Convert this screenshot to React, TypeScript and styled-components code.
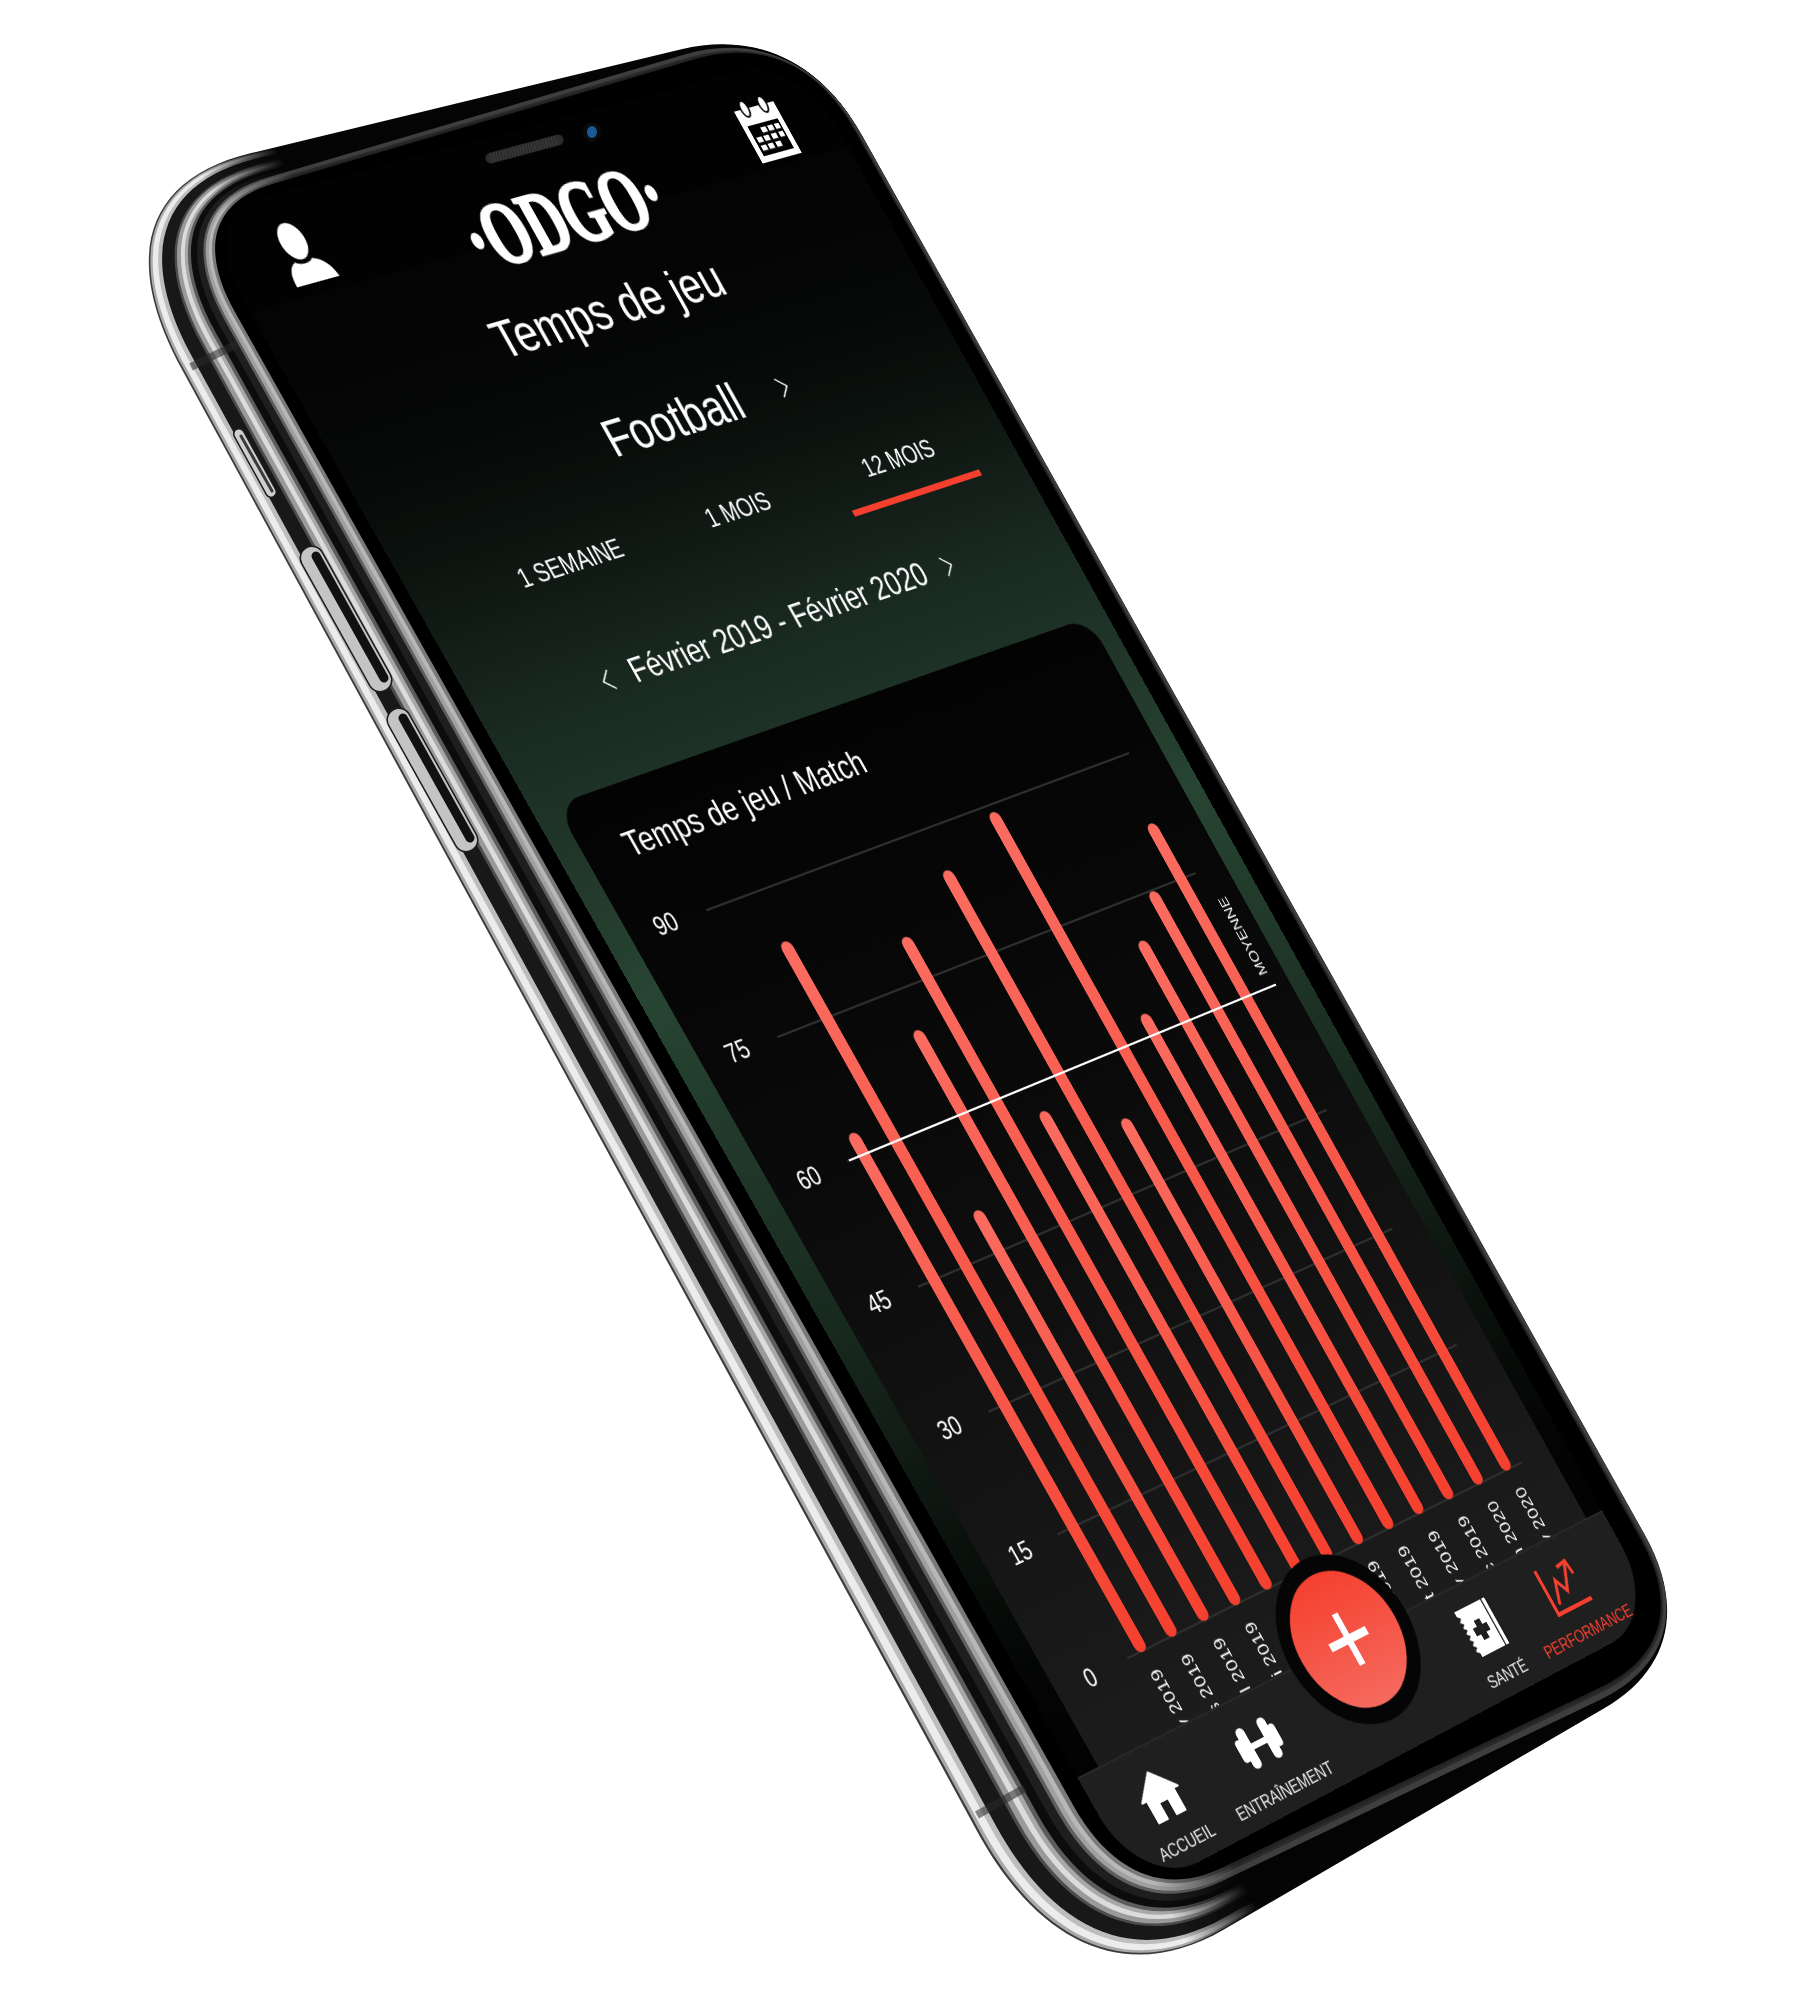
import React from 'react';
import styled, { createGlobalStyle } from 'styled-components';

type Pt = [number, number];

/* Where the flat 375x812 screen lands in the picture. */
const SCREEN: Pt[] = [[195, 215], [798, 56], [1661, 1617], [1142, 1892]];
/* Outer silhouette of the device body, same corner order. */
const OUTER: Pt[] = [[86, 193], [798, 21], [1708, 1648], [1077, 2015]];
const OUTER_R: [number, number][] = [[200, 170], [120, 130], [130, 120], [170, 210]];

const SW = 375;
const SH = 812;

function screenMatrix(q: Pt[]): string {
  const [p0, p1, p2, p3] = q;
  const dx1 = p1[0] - p2[0];
  const dy1 = p1[1] - p2[1];
  const dx2 = p3[0] - p2[0];
  const dy2 = p3[1] - p2[1];
  const sx = p0[0] - p1[0] + p2[0] - p3[0];
  const sy = p0[1] - p1[1] + p2[1] - p3[1];
  const den = dx1 * dy2 - dy1 * dx2;
  const g = (sx * dy2 - sy * dx2) / den;
  const h = (dx1 * sy - dy1 * sx) / den;
  const a = p1[0] - p0[0] + g * p1[0];
  const b = p3[0] - p0[0] + h * p3[0];
  const d = p1[1] - p0[1] + g * p1[1];
  const e = p3[1] - p0[1] + h * p3[1];
  return `matrix3d(${a / SW},${d / SW},0,${g / SW},${b / SH},${e / SH},0,${h / SH},0,0,1,0,${p0[0]},${p0[1]},0,1)`;
}

const lerp = (a: number, b: number, t: number) => a + (b - a) * t;

function bodyPath(fLeft: number, fRight: number): string {
  const fs = [fLeft, fRight, fRight, fLeft];
  const c = OUTER.map((o, i): Pt => [lerp(o[0], SCREEN[i][0], fs[i]), lerp(o[1], SCREEN[i][1], fs[i])]);
  const k = 0.64;
  let path = '';
  c.forEach((p, i) => {
    const prev = c[(i + 3) % 4];
    const next = c[(i + 1) % 4];
    const scale = lerp(1, 0.5, fs[i]);
    const rp = OUTER_R[i][0] * scale;
    const rn = OUTER_R[i][1] * scale;
    const lp = Math.hypot(prev[0] - p[0], prev[1] - p[1]);
    const ln = Math.hypot(next[0] - p[0], next[1] - p[1]);
    const a: Pt = [p[0] + ((prev[0] - p[0]) / lp) * rp, p[1] + ((prev[1] - p[1]) / lp) * rp];
    const b: Pt = [p[0] + ((next[0] - p[0]) / ln) * rn, p[1] + ((next[1] - p[1]) / ln) * rn];
    const c1: Pt = [lerp(a[0], p[0], k), lerp(a[1], p[1], k)];
    const c2: Pt = [lerp(b[0], p[0], k), lerp(b[1], p[1], k)];
    path += `${i === 0 ? 'M' : 'L'}${a[0]} ${a[1]} C${c1[0]} ${c1[1]} ${c2[0]} ${c2[1]} ${b[0]} ${b[1]} `;
  });
  return path + 'Z';
}

/* Bands of the metal edge, outermost first: fill, far colour, left and right inset. */
const BANDS: [string, string, number, number][] = [
  ['#3c3c3c', '#060606', 0, 0],
  ['#a9a9a9', '#050505', 0.02, 0.03],
  ['#ececec', '#050505', 0.05, 0.03],
  ['#bdbdbd', '#050505', 0.12, 0.03],
  ['#181818', '#040404', 0.17, 0.03],
  ['#4c4c4c', '#040404', 0.33, 0.03],
  ['#9a9a9a', '#040404', 0.36, 0.03],
  ['#dcdcdc', '#040404', 0.41, 0.03],
  ['#a8a8a8', '#040404', 0.46, 0.03],
  ['#5c5c5c', '#040404', 0.5, 0.03],
  ['#0c0c0c', '#040404', 0.54, 0.03],
  ['#1e1e1e', '#040404', 0.62, 0.03],
  ['#5e5e5e', '#3e3e3e', 0.7, 0],
  ['#a0a0a0', '#3e3e3e', 0.73, 0.06],
  ['#b8b8b8', '#2a2a2a', 0.77, 0.12],
  ['#7a7a7a', '#222222', 0.81, 0.17],
  ['#000000', '#000000', 0.85, 0.22],
];

const BARS = [62.6, 83.9, 50, 70, 79.9, 57, 85, 53, 89, 62.6, 70, 74.7, 81.8];
const MONTHS = ['Fév 2019', 'Mars 2019', 'Avril 2019', 'Mai 2019', 'Juin 2019', 'Juil 2019', 'Août 2019', 'Sept 2019', 'Oct 2019', 'Nov 2019', 'Déc 2019', 'Jan 2020', 'Fév 2020'];
const TICKS = [90, 75, 60, 45, 30, 15, 0];
const PLOT_H = 371;

const Global = createGlobalStyle`
  html, body { margin: 0; background: #fff; }
  body { font-family: "Liberation Sans", Arial, sans-serif; }
`;

const Canvas = styled.div`
  position: relative;
  width: 1818px;
  height: 2000px;
  overflow: hidden;
  background: #fff;
`;

const DeviceArt = styled.svg`
  position: absolute;
  left: 0;
  top: 0;
`;

const Screen = styled.div`
  position: absolute;
  left: 0;
  top: 0;
  width: ${SW}px;
  height: ${SH}px;
  transform-origin: 0 0;
  transform: ${screenMatrix(SCREEN)};
  display: flex;
  flex-direction: column;
  overflow: hidden;
  border-radius: 38px;
  color: #fff;
  background: linear-gradient(180deg, #020202 0%, #040504 10%, #070a08 16%, #0c130f 21%, #131f18 26%, #1a2b22 31%, #284432 46%, #213a2b 54%, #18291e 66%, #0b130e 78%, #030403 88%, #000 100%);
`;

const Header = styled.header`
  flex: none;
  height: 46px;
  box-sizing: border-box;
  display: flex;
  justify-content: space-between;
  align-items: flex-start;
  padding: 13px 27px 0 28px;
  background: #020202;
`;

const Logo = styled.div`
  margin: 12px 0 0 9px;
  font-family: "Liberation Serif", serif;
  font-weight: 700;
  font-size: 41px;
  line-height: 34px;
  letter-spacing: -0.5px;
  transform: scaleX(0.8);
  -webkit-text-stroke: 1.2px #fff;
  white-space: nowrap;
`;

const Title = styled.h1`
  margin: 27px 0 0;
  padding-left: 3px;
  font-weight: 400;
  font-size: 24px;
  line-height: 28px;
  text-align: center;
`;

const SportRow = styled.div`
  margin-top: 26px;
  padding-left: 147.5px;
  height: 30px;
  display: flex;
  align-items: center;
  gap: 25px;
  font-size: 24px;
  line-height: 30px;
`;

const Tabs = styled.nav`
  margin-top: 23px;
  padding-left: 39px;
  display: flex;
`;

const Tab = styled.div<{ $active?: boolean }>`
  width: 106px;
  box-sizing: border-box;
  display: flex;
  flex-direction: column;
  align-items: center;
  font-size: 12px;
  line-height: 16px;
  letter-spacing: -0.1px;

  &::after {
    content: '';
    margin-top: 8px;
    width: 86px;
    height: 3px;
    background: ${(p) => (p.$active ? '#f5402f' : 'transparent')};
  }
`;

const MonthRow = styled.div`
  margin-top: 24px;
  height: 20px;
  display: flex;
  justify-content: center;
  align-items: center;
  gap: 12px;
  font-size: 15.8px;
  line-height: 20px;
  white-space: nowrap;
`;

const Card = styled.section`
  flex: 1;
  min-height: 0;
  margin: 33px 12px 0 14px;
  padding-top: 17px;
  overflow: hidden;
  border-radius: 14px 14px 0 0;
  background: linear-gradient(180deg, #030303 0%, #0a0a0a 40%, #1c1c1c 100%);
`;

const CardTitle = styled.h2`
  margin: 0 0 0 24px;
  font-weight: 400;
  font-size: 16px;
  line-height: 20px;
  white-space: nowrap;
`;

const Chart = styled.div`
  margin-top: 27px;
  display: grid;
  grid-template-columns: 45px 284px;
`;

const YAxis = styled.div`
  height: ${PLOT_H}px;
  display: flex;
  flex-direction: column;
  justify-content: space-between;
  align-items: center;
  padding-right: 1px;
  box-sizing: border-box;
`;

const YTick = styled.span`
  height: 0;
  line-height: 0;
  font-size: 12px;
`;

const Plot = styled.div`
  position: relative;
  height: ${PLOT_H}px;
`;

const GridLines = styled.div`
  position: absolute;
  inset: 0 0 0 2px;
  display: flex;
  flex-direction: column;
  justify-content: space-between;
`;

const GridLine = styled.i`
  display: block;
  height: 1px;
  background: #2e2e2e;
`;

const BarRow = styled.div`
  position: absolute;
  inset: 0;
  display: flex;
  justify-content: space-between;
  align-items: flex-end;
  padding: 0 6.5px 0 8.5px;
`;

const Bar = styled.div<{ $value: number }>`
  width: 7px;
  height: ${(p) => (p.$value / 90) * PLOT_H}px;
  border-radius: 4px;
  background: linear-gradient(180deg, #fb6c60 0%, #f75a4c 45%, #f5402f 100%);
`;

const AverageLine = styled.div`
  position: absolute;
  left: 3px;
  width: 292px;
  top: 123px;
  height: 1.4px;
  background: #fff;
`;

const AverageTag = styled.span`
  position: absolute;
  left: 287px;
  top: 77px;
  writing-mode: vertical-rl;
  transform: rotate(180deg);
  font-size: 8px;
  line-height: 10px;
  white-space: nowrap;
`;

const XAxis = styled.div`
  grid-column: 2;
  margin-top: 9px;
  display: flex;
  justify-content: space-between;
  align-items: flex-start;
  padding: 0 6.5px 0 8.5px;
`;

const XTick = styled.span`
  width: 7px;
  display: flex;
  justify-content: center;
  writing-mode: vertical-rl;
  transform: rotate(180deg);
  font-size: 9.5px;
  line-height: 7px;
  letter-spacing: 0.2px;
  white-space: nowrap;
`;

const TabBar = styled.nav`
  position: relative;
  z-index: 1;
  flex: none;
  height: 57px;
  box-sizing: border-box;
  padding-left: 4px;
  display: grid;
  grid-template-columns: 68px 67px 96px 62px 60px;
  background: #1f1f1f;
  border-top: 1px solid #232926;
`;

const NavItem = styled.div<{ $active?: boolean }>`
  display: flex;
  flex-direction: column;
  align-items: center;
  padding-top: 10px;
  font-size: 8.5px;
  line-height: 12px;
  letter-spacing: -0.1px;
  white-space: nowrap;
  color: ${(p) => (p.$active ? '#f5402f' : '#eaeaea')};
`;

const NavIcon = styled.svg`
  height: 24px;
  margin-bottom: 6px;
`;

const AddCell = styled.div`
  display: flex;
  justify-content: center;
  align-items: flex-start;
`;

const AddButton = styled.div`
  margin-top: -42px;
  width: 82px;
  height: 82px;
  flex: none;
  box-sizing: border-box;
  border: 8px solid #050505;
  border-radius: 50%;
  display: flex;
  align-items: center;
  justify-content: center;
  background: linear-gradient(180deg, #f5402f 0%, #f56a5e 100%);
`;

const Chevron = ({ left }: { left?: boolean }) => (
  <svg width="6" height="10" viewBox="0 0 6 10" fill="none" stroke="#fff" strokeWidth="0.8">
    <polyline points={left ? '5.5,0.5 0.5,5 5.5,9.5' : '0.5,0.5 5.5,5 0.5,9.5'} />
  </svg>
);

const Avatar = () => (
  <svg width="30" height="28" viewBox="0 0 30 28" fill="#fff">
    <ellipse cx="14" cy="8.5" rx="7" ry="8.5" />
    <path d="M3 28 C3 22 5 19 9 17.5 C11 19.5 17 19.5 19 17.5 C24 19 27 22 28 28 Z" />
  </svg>
);

const Calendar = () => (
  <svg width="30" height="30" viewBox="0 0 30 30">
    <rect x="2" y="4" width="26" height="26" fill="#fff" />
    <rect x="5" y="12" width="20" height="15" fill="#000" />
    <ellipse cx="9" cy="4" rx="2.4" ry="4" fill="#fff" stroke="#000" strokeWidth="1" />
    <ellipse cx="21" cy="4" rx="2.4" ry="4" fill="#fff" stroke="#000" strokeWidth="1" />
    <g fill="#fff">
      <rect x="12" y="14" width="3.4" height="2.6" />
      <rect x="16.5" y="14" width="3.4" height="2.6" />
      <rect x="21" y="14" width="3" height="2.6" />
      <rect x="6.5" y="18" width="3.4" height="2.6" />
      <rect x="11" y="18" width="3.4" height="2.6" />
      <rect x="16" y="18" width="3.4" height="2.6" />
      <rect x="21" y="18" width="3" height="2.6" />
      <rect x="6.5" y="22" width="3.4" height="2.6" />
      <rect x="11" y="22" width="3.4" height="2.6" />
      <rect x="16" y="22" width="3.4" height="2.6" />
    </g>
  </svg>
);

const Plus = () => (
  <svg width="26" height="26" viewBox="0 0 26 26" fill="#fff">
    <rect x="11" y="0" width="4" height="26" />
    <rect x="0" y="11" width="26" height="4" />
  </svg>
);

const App = () => (
  <Canvas>
    <Global />
    <DeviceArt width="1818" height="2000" viewBox="0 0 1818 2000">
      <defs>
        {BANDS.map(([from, to], i) => (
          <linearGradient key={i} id={`band${i}`} gradientUnits="userSpaceOnUse" x1="78" y1="-45" x2="148" y2="-84">
            <stop offset="0" stopColor={from} />
            <stop offset="1" stopColor={to} />
          </linearGradient>
        ))}
      </defs>
      {BANDS.slice(0, 12).map(([, , l, r], i) => (
        <path key={i} d={bodyPath(l, r)} fill={`url(#band${i})`} />
      ))}
      <g stroke="#2a2a2a" strokeOpacity="0.55" strokeWidth="8" fill="none">
        <line x1="191" y1="367" x2="237" y2="344" />
        <line x1="977" y1="1815" x2="1025" y2="1788" />
      </g>
      {BANDS.slice(12).map(([, , l, r], i) => (
        <path key={i} d={bodyPath(l, r)} fill={`url(#band${i + 12})`} />
      ))}
      <g fill="none" strokeLinecap="round">
        <line x1="239" y1="434" x2="271" y2="492" stroke="#1d1d1d" strokeWidth="12" />
        <line x1="239" y1="434" x2="271" y2="492" stroke="#cfcfcf" strokeWidth="9" />
        <line x1="241" y1="436" x2="272" y2="491" stroke="#3a3a3a" strokeWidth="3" />
        <line x1="312" y1="558" x2="380" y2="680" stroke="#1d1d1d" strokeWidth="25" />
        <line x1="312" y1="558" x2="380" y2="680" stroke="#c4c4c4" strokeWidth="22" />
        <line x1="316" y1="556" x2="384" y2="678" stroke="#111" strokeWidth="9" />
        <line x1="399" y1="720" x2="466" y2="840" stroke="#1d1d1d" strokeWidth="25" />
        <line x1="399" y1="720" x2="466" y2="840" stroke="#c4c4c4" strokeWidth="22" />
        <line x1="403" y1="718" x2="470" y2="838" stroke="#111" strokeWidth="9" />
      </g>
    </DeviceArt>

    <Screen>
      <Header>
        <Avatar />
        <Logo>·ODGO·</Logo>
        <Calendar />
      </Header>
      <Title>Temps de jeu</Title>
      <SportRow>
        <span>Football</span>
        <Chevron />
      </SportRow>
      <Tabs>
        <Tab>1 SEMAINE</Tab>
        <Tab>1 MOIS</Tab>
        <Tab $active>12 MOIS</Tab>
      </Tabs>
      <MonthRow>
        <Chevron left />
        <span>Février 2019 - Février 2020</span>
        <Chevron />
      </MonthRow>
      <Card>
        <CardTitle>Temps de jeu / Match</CardTitle>
        <Chart>
          <YAxis>
            {TICKS.map((t) => (
              <YTick key={t}>{t}</YTick>
            ))}
          </YAxis>
          <Plot>
            <GridLines>
              {TICKS.map((t) => (
                <GridLine key={t} />
              ))}
            </GridLines>
            <BarRow>
              {BARS.map((v, i) => (
                <Bar key={i} $value={v} />
              ))}
            </BarRow>
            <AverageLine />
            <AverageTag>MOYENNE</AverageTag>
          </Plot>
          <XAxis>
            {MONTHS.map((m, i) => (
              <XTick key={i}>{m}</XTick>
            ))}
          </XAxis>
        </Chart>
      </Card>
      <TabBar>
        <NavItem>
          <NavIcon width="26" viewBox="0 0 26 24" fill="#fff" stroke="#fff" strokeWidth="1" strokeLinejoin="round">
            <path d="M13 1 L25 12 H22 V23 H16 V15 H10 V23 H4 V12 H1 Z" />
          </NavIcon>
          ACCUEIL
        </NavItem>
        <NavItem>
          <NavIcon width="30" viewBox="0 0 30 24" fill="#fff">
            <rect x="9" y="10.5" width="12" height="3" />
            <rect x="5" y="2" width="5.5" height="20" rx="2.5" />
            <rect x="19.5" y="2" width="5.5" height="20" rx="2.5" />
            <rect x="1.5" y="6.5" width="4.5" height="11" rx="2" />
            <rect x="24" y="6.5" width="4.5" height="11" rx="2" />
          </NavIcon>
          ENTRAÎNEMENT
        </NavItem>
        <AddCell>
          <AddButton>
            <Plus />
          </AddButton>
        </AddCell>
        <NavItem>
          <NavIcon width="24" viewBox="0 0 24 24" fill="#fff">
            <path d="M1 0 H23 V24 H3 L3 22 L1 20.5 L3 19 L1 17.5 L3 16 L1 14.5 L3 13 L1 11.5 L3 10 L1 8.5 L3 7 L1 5.5 L3 4 L1 2.5 Z" />
            <rect x="20" y="0" width="0.8" height="24" fill="#1f1f1f" />
            <path d="M9.5 7.5 H13.5 V10.5 H16.5 V14.5 H13.5 V17.5 H9.5 V14.5 H6.5 V10.5 H9.5 Z" fill="#1f1f1f" />
          </NavIcon>
          SANTÉ
        </NavItem>
        <NavItem $active>
          <NavIcon width="30" viewBox="0 0 30 24" fill="none" stroke="#f5402f" strokeWidth="1.8">
            <polyline points="3,0 3,23 28,23" strokeWidth="2" />
            <polyline points="7,19 12,8 16,15 23,3" />
            <polyline points="17,3 24,2 25,9" />
          </NavIcon>
          PERFORMANCE
        </NavItem>
      </TabBar>
    </Screen>

    <DeviceArt width="1818" height="2000" viewBox="0 0 1818 2000">
      <line x1="491" y1="158" x2="558" y2="140" stroke="#2b2b2b" strokeWidth="11" strokeLinecap="round" />
      <line x1="491" y1="158" x2="558" y2="140" stroke="#3d3d3d" strokeWidth="9" strokeDasharray="1 2" />
      <ellipse cx="592" cy="132" rx="9" ry="10" fill="#0b0b0b" />
      <ellipse cx="592" cy="132" rx="5" ry="6" fill="#1c5a94" />
    </DeviceArt>
  </Canvas>
);

export default App;
